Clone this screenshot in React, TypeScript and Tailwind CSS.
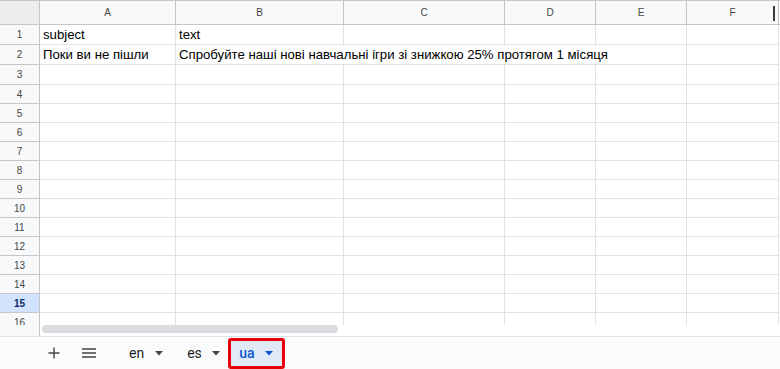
import React from "react";

const cols = [
  { l: "A", w: "w-[136px]" },
  { l: "B", w: "w-[168px]" },
  { l: "C", w: "w-[161px]" },
  { l: "D", w: "w-[91px]" },
  { l: "E", w: "w-[91px]" },
  { l: "F", w: "w-[92px]" },
];

function Caret({ color = "#444746" }: { color?: string }) {
  return (
    <svg width="8" height="5" viewBox="0 0 8 5" className="shrink-0">
      <path d="M0 0 L8 0 L4 4.5 Z" fill={color} />
    </svg>
  );
}

export default function App() {
  const rows = Array.from({ length: 16 }, (_, i) => i + 1);
  return (
    <div
      className="w-[780px] h-[369px] overflow-hidden bg-white flex flex-col"
      style={{ fontFamily: "'Liberation Sans', Arial, sans-serif" }}
    >
      <div className="h-[325px] overflow-hidden flex flex-col shrink-0">
        {/* header */}
        <div className="flex h-[25px] shrink-0 border-t border-b border-[#c4c7c5] bg-[#f8f9fa]">
          <div className="w-[40px] shrink-0 border-r border-[#c4c7c5] bg-[#eceef0]" />
          {cols.map((c) => (
            <div
              key={c.l}
              className={`${c.w} shrink-0 border-r border-[#c4c7c5] flex items-center justify-center text-[10px] text-[#444746] relative`}
            >
              {c.l}
              {c.l === "F" && (
                <div className="absolute right-[3px] top-[5px] w-[2px] h-[15px] bg-[#3c3c3c]" />
              )}
            </div>
          ))}
        </div>
        {rows.map((r) => {
          const h = r <= 3 ? "h-[20px]" : "h-[19px]";
          const active = r === 15;
          return (
            <div key={r} className={`flex ${h} shrink-0`}>
              <div
                className={`w-[40px] shrink-0 border-r border-b border-[#c4c7c5] flex items-center justify-center text-[10px] ${
                  active
                    ? "bg-[#d3e3fd] text-[#0b2a6b] font-bold"
                    : "bg-[#f8f9fa] text-[#444746]"
                }`}
              >
                {r}
              </div>
              {r === 2 ? (
                <>
                  <div className="w-[136px] shrink-0 border-r border-b border-[#e1e1e1] flex items-center pl-[3px] text-[13.2px] text-black whitespace-nowrap overflow-hidden">
                    Поки ви не пішли
                  </div>
                  <div className="w-[511px] shrink-0 border-r border-b border-[#e1e1e1] flex items-center pl-[3px] text-[13.2px] text-black whitespace-nowrap overflow-hidden">
                    Спробуйте наші нові навчальні ігри зі знижкою 25% протягом 1 місяця
                  </div>
                  <div className="w-[92px] shrink-0 border-r border-b border-[#e1e1e1]" />
                </>
              ) : (
                cols.map((c, ci) => (
                  <div
                    key={c.l}
                    className={`${c.w} shrink-0 border-r border-b border-[#e1e1e1] flex items-center pl-[3px] text-[13.2px] text-black whitespace-nowrap overflow-hidden`}
                  >
                    {r === 1 && ci === 0 ? "subject" : r === 1 && ci === 1 ? "text" : ""}
                  </div>
                ))
              )}
            </div>
          );
        })}
      </div>
      {/* scrollbar strip */}
      <div className="h-[11px] shrink-0 flex">
        <div className="w-[40px] shrink-0 bg-[#f8f9fa] border-r border-[#c4c7c5]" />
        <div className="flex-1 pl-[2px]">
          <div className="w-[296px] h-[8px] rounded-full bg-[#dadce0]" />
        </div>
      </div>
      {/* tab bar */}
      <div
        className="flex-1 border-t border-[#e0e2e6] bg-[#f9fbfd] flex items-center text-[14px] text-[#1f1f1f]"
        style={{ fontFamily: "Roboto, 'Noto Sans', sans-serif" }}
      >
        <div className="w-[46px] shrink-0" />
        <svg width="16" height="16" viewBox="0 0 16 16" className="shrink-0">
          <path d="M8 2.5v11M2.5 8h11" stroke="#444746" strokeWidth="1.4" />
        </svg>
        <div className="w-[20px] shrink-0" />
        <svg width="14" height="12" viewBox="0 0 14 12" className="shrink-0">
          <path d="M0 2h14M0 6h14M0 10h14" stroke="#444746" strokeWidth="1.4" />
        </svg>
        <div className="w-[33px] shrink-0" />
        <div className="flex items-center gap-[11px]">
          <span>en</span>
          <Caret />
        </div>
        <div className="w-[24px] shrink-0" />
        <div className="flex items-center gap-[10px]">
          <span>es</span>
          <Caret />
        </div>
        <div className="w-[8px] shrink-0" />
        <div className="h-[31px] w-[57px] border-[3px] border-[#e8000b] rounded-[3px] bg-[#e1e9f7] flex items-center justify-center gap-[11px] text-[#0b57d0] font-medium">
          <span>ua</span>
          <Caret color="#0b57d0" />
        </div>
      </div>
    </div>
  );
}
